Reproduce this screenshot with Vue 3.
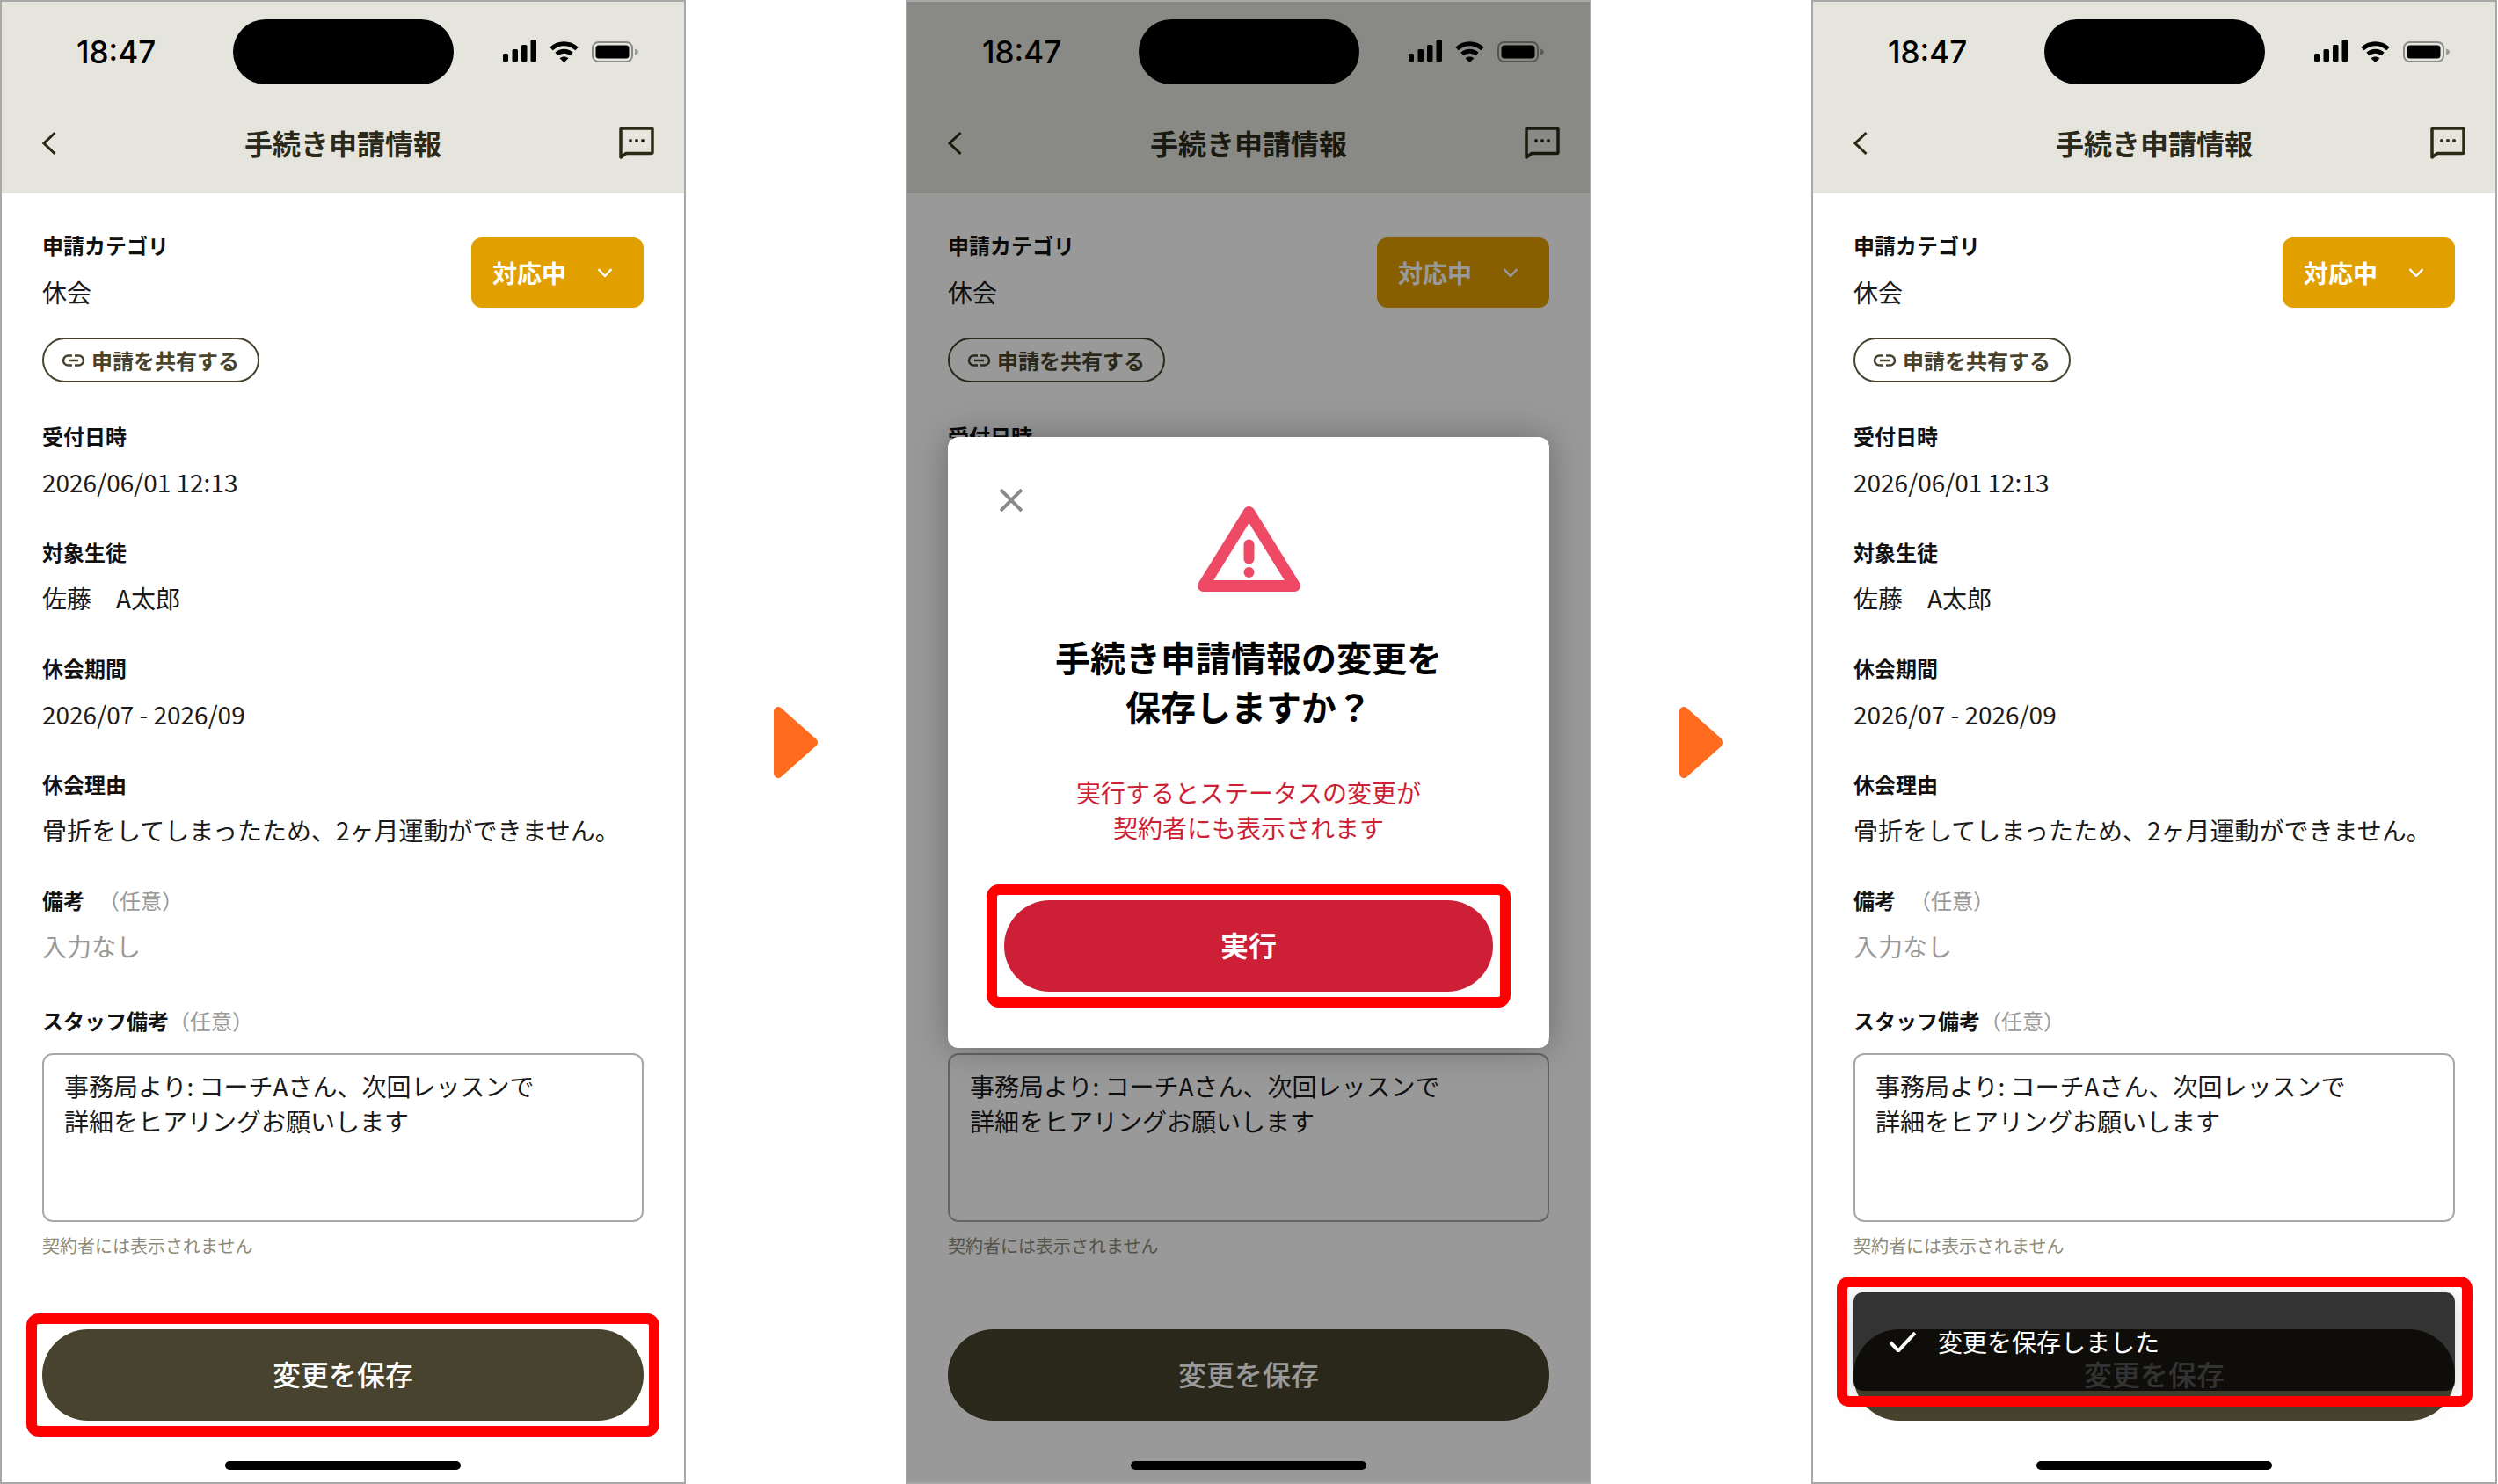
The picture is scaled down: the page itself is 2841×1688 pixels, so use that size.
<script setup>
const screens = [
  { id: 1, highlightSave: true },
  { id: 2, modal: true },
  { id: 3, toast: true },
]
const fields = [
  { label: '受付日時', value: '2026/06/01 12:13' },
  { label: '対象生徒', value: '佐藤　A太郎' },
  { label: '休会期間', value: '2026/07 - 2026/09' },
  { label: '休会理由', value: '骨折をしてしまったため、2ヶ月運動ができません。' },
]
</script>

<template>
  <div class="board">
    <template v-for="(s, i) in screens" :key="s.id">
      <div v-if="i > 0" class="step">
        <svg class="arrow" width="50" height="81" viewBox="0 0 50 81">
          <polygon points="5,5 45,40.5 5,76" />
        </svg>
      </div>
      <section class="phone">
        <header class="head">
          <div class="status">
            <span class="time">18:47</span>
            <span class="island"></span>
            <div class="sys">
              <svg width="38" height="25" viewBox="0 0 38 25" class="sys-signal">
                <rect x="0" y="16" width="6" height="9" rx="1.5" />
                <rect x="10.5" y="11" width="6.5" height="14" rx="1.5" />
                <rect x="21" y="6" width="6.5" height="19" rx="1.5" />
                <rect x="31.5" y="0" width="6.5" height="25" rx="1.5" />
              </svg>
              <svg width="33" height="24" viewBox="0 0 33 24" class="sys-wifi">
                <path d="M2 8.5C10.5 .8 22.5 .8 31 8.5" />
                <path d="M8 14.5C13 10 20 10 25 14.5" />
                <path class="wifi-dot" d="M16.5 24L11.5 19.2C14.5 16.8 18.5 16.8 21.5 19.2Z" />
              </svg>
              <svg width="54" height="24" viewBox="0 0 54 24" class="sys-battery">
                <rect class="bat-frame" x="1" y="1" width="45" height="22" rx="6.5" />
                <rect class="bat-fill" x="4.5" y="4.5" width="38" height="15" rx="3.5" />
                <path class="bat-tip" d="M49 8.5c2.5.5 4 2 4 3.5s-1.500 3-4 3.500Z" />
              </svg>
            </div>
          </div>
          <div class="nav">
            <svg class="nav-back" width="16" height="28" viewBox="0 0 16 28">
              <path d="M14.500 2L2 14L14.500 26" />
            </svg>
            <h1 class="nav-title">手続き申請情報</h1>
            <svg class="nav-chat" width="40" height="38" viewBox="0 0 40 38">
              <path class="chat-line" d="M2 35V3.500Q2 2 3.500 2H36.500Q38 2 38 3.500V29Q38 30.500 36.500 30.500H8L2 35Z" />
              <circle cx="13" cy="16" r="2" />
              <circle cx="20" cy="16" r="2" />
              <circle cx="27" cy="16" r="2" />
            </svg>
          </div>
        </header>

        <main class="body">
          <div class="top-row">
            <div>
              <div class="label">申請カテゴリ</div>
              <div class="value first">休会</div>
            </div>
            <div class="state">
              <span>対応中</span>
              <svg width="16" height="10" viewBox="0 0 16 10">
                <path d="M.5 1L8 9L15.500 1" />
              </svg>
            </div>
          </div>
          <div class="share">
            <svg width="27" height="14" viewBox="0 0 27 14">
              <path d="M12 1.500H7.500a5.500 5.500 0 0 0 0 11H12M15 1.500H19.500a5.500 5.500 0 0 1 0 11H15M8 7H19" />
            </svg>
            <span>申請を共有する</span>
          </div>

          <div class="fields">
            <div v-for="f in fields" :key="f.label" class="field">
              <div class="label">{{ f.label }}</div>
              <div class="value">{{ f.value }}</div>
            </div>
            <div class="field">
              <div class="label">備考<span class="optional wide">（任意）</span></div>
              <div class="value muted">入力なし</div>
            </div>
          </div>

          <div class="label staff">スタッフ備考<span class="optional">（任意）</span></div>
          <div class="memo">事務局より: コーチAさん、次回レッスンで<br />詳細をヒアリングお願いします</div>
          <p class="hint">契約者には表示されません</p>

          <button class="save" :class="{ marked: s.highlightSave }">変更を保存</button>
          <div class="home"></div>
        </main>

        <div v-if="s.modal" class="scrim">
          <div class="modal">
            <svg class="close" width="26" height="26" viewBox="0 0 26 26">
              <path d="M1 1L25 25M25 1L1 25" />
            </svg>
            <svg class="warn" width="117" height="97" viewBox="0 0 117 97">
              <path class="warn-tri" d="M58.500 6.500L6.500 90.500H110.500Z" />
              <rect x="52.500" y="37.500" width="12" height="28" rx="6" />
              <circle cx="58.500" cy="75" r="6" />
            </svg>
            <h2 class="modal-title">手続き申請情報の変更を<br />保存しますか？</h2>
            <p class="modal-note">実行するとステータスの変更が<br />契約者にも表示されます</p>
            <button class="run marked">実行</button>
          </div>
        </div>

        <div v-if="s.toast" class="toast marked-toast">
          <svg width="30" height="23" viewBox="0 0 30 23">
            <path d="M1 12L10 21.500L29 1" />
          </svg>
          <span>変更を保存しました</span>
        </div>
      </section>
    </template>
  </div>
</template>

<style>
html, body { margin: 0; background: #fff; }
</style>

<style scoped>
.board {
  width: 2841px;
  height: 1688px;
  display: flex;
  align-items: center;
  font-family: "Noto Sans CJK JP", "Noto Sans", sans-serif;
  color: #111;
  overflow: hidden;
}
.step {
  width: 250px;
  display: flex;
  justify-content: center;
}
.arrow polygon {
  fill: #ff6b1f;
  stroke: #ff6b1f;
  stroke-width: 10;
  stroke-linejoin: round;
}
.phone {
  position: relative;
  flex: none;
  width: 780px;
  height: 1688px;
  box-sizing: border-box;
  border: 2px solid #a8a8a8;
  background: #fff;
  display: flex;
  flex-direction: column;
}
.head {
  height: 218px;
  background: #e5e5de;
  flex: none;
}
.status {
  display: grid;
  grid-template-columns: 1fr 251px 1fr;
  align-items: center;
  padding-top: 20px;
}
.time {
  font-family: Inter, sans-serif;
  font-weight: 500;
  font-size: 35px;
  line-height: 74px;
  padding-left: 85px;
  color: #000;
}
.island {
  height: 74px;
  border-radius: 37px;
  background: #000;
}
.sys {
  display: flex;
  align-items: flex-start;
  padding-left: 56px;
  gap: 15px;
  margin-top: -3px;
}
.sys-signal rect { fill: #000; }
.sys-wifi { margin-top: 2px; }
.sys-wifi path {
  fill: none;
  stroke: #000;
  stroke-width: 5;
}
.sys-wifi .wifi-dot { fill: #000; stroke: none; }
.sys-battery { margin-top: 2px; }
.bat-frame { fill: none; stroke: #8a8a86; stroke-width: 2; }
.bat-fill { fill: #000; }
.bat-tip { fill: #9a9a96; }
.nav {
  height: 64px;
  margin-top: 35px;
  padding: 0 34px;
  display: grid;
  grid-template-columns: 1fr auto 1fr;
  align-items: center;
}
.nav-back { justify-self: start; margin-left: 12px; }
.nav-back path {
  fill: none;
  stroke: #2b2a14;
  stroke-width: 3;
}
.nav-title {
  margin: 0;
  padding-bottom: 2px;
  font-size: 32px;
  line-height: 62px;
  font-weight: 700;
  color: #2b2a1a;
}
.nav-chat { justify-self: end; margin-top: -1px; }
.nav-chat circle { fill: #2b2a14; }
.chat-line {
  fill: none;
  stroke: #2b2a14;
  stroke-width: 3.5;
  stroke-linejoin: round;
}
.body {
  flex: 1;
  padding: 43px 46px 0;
}
.top-row {
  display: flex;
  justify-content: space-between;
  align-items: flex-start;
}
.label {
  font-size: 24px;
  line-height: 32px;
  font-weight: 700;
  color: #111;
}
.value {
  margin-top: 16px;
  font-size: 28px;
  line-height: 40px;
  font-weight: 400;
  color: #1a1a1a;
}
.value.first { margin-top: 17px; }
.muted { color: #999; }
.optional {
  font-weight: 400;
  color: #999;
}
.optional.wide { margin-left: 16px; }
.state {
  margin-top: 7px;
  width: 196px;
  height: 80px;
  box-sizing: border-box;
  padding: 0 36px 0 24px;
  background: #e29f00;
  border-radius: 12px;
  display: flex;
  align-items: center;
  justify-content: space-between;
  color: #fff;
  font-size: 28px;
  font-weight: 700;
}
.state svg path {
  fill: none;
  stroke: #fff;
  stroke-width: 2.5;
}
.share {
  margin-top: 32px;
  width: 247px;
  height: 51px;
  box-sizing: border-box;
  border: 2px solid #47432e;
  border-radius: 26px;
  padding-left: 20px;
  display: flex;
  align-items: center;
  gap: 7px;
  color: #47432e;
  font-size: 24px;
  font-weight: 700;
  line-height: 1;
}
.share svg path {
  fill: none;
  stroke: #47432e;
  stroke-width: 2.500;
}
.fields {
  margin-top: 45px;
  display: flex;
  flex-direction: column;
  gap: 44px;
}
.staff { margin-top: 49px; }
.memo {
  margin-top: 21px;
  height: 192px;
  box-sizing: border-box;
  border: 2px solid #a8a8a8;
  border-radius: 12px;
  padding: 15px 23px;
  font-size: 28px;
  line-height: 40px;
  color: #1a1a1a;
}
.hint {
  margin: 13px 0 0;
  font-size: 20px;
  line-height: 28px;
  color: #8e8b78;
}
.save {
  position: relative;
  display: block;
  width: 684px;
  height: 104px;
  margin-top: 81px;
  padding: 0 0 4px;
  border: 0;
  border-radius: 52px;
  background: #47432e;
  color: #fff;
  font: 500 32px/1 "Noto Sans CJK JP", sans-serif;
}
.home {
  width: 268px;
  height: 10px;
  margin: 46px auto 0;
  border-radius: 5px;
  background: #000;
}
.marked::after {
  content: "";
  position: absolute;
  inset: -18px;
  border: 12px solid #f00;
  border-radius: 14px;
  pointer-events: none;
}
.scrim {
  position: absolute;
  inset: 0;
  background: rgba(0, 0, 0, 0.4);
  display: flex;
  align-items: center;
  justify-content: center;
}
.modal {
  position: relative;
  width: 684px;
  box-sizing: border-box;
  padding: 79px 0 64px;
  background: #fff;
  border-radius: 12px;
  box-shadow: 0 0 40px rgba(0, 0, 0, 0.3);
  display: flex;
  flex-direction: column;
  align-items: center;
  text-align: center;
}
.close {
  position: absolute;
  left: 59px;
  top: 59px;
}
.close path {
  fill: none;
  stroke: #8a8a8e;
  stroke-width: 4;
}
.warn rect, .warn circle { fill: #ef4a65; }
.warn-tri {
  fill: none;
  stroke: #ef4a65;
  stroke-width: 13;
  stroke-linejoin: round;
}
.modal-title {
  margin: 46px 0 0;
  font-size: 40px;
  line-height: 56px;
  font-weight: 700;
  color: #000;
}
.modal-note {
  margin: 50px 0 0;
  font-size: 28px;
  line-height: 40px;
  color: #cd1f36;
}
.run {
  position: relative;
  width: 556px;
  height: 104px;
  margin-top: 63px;
  padding: 0 0 3px;
  border: 0;
  border-radius: 52px;
  background: #cd1f36;
  color: #fff;
  font: 700 32px/1 "Noto Sans CJK JP", sans-serif;
}
.run.marked::after { inset: -18px -20px; }
.toast {
  position: absolute;
  left: 46px;
  right: 46px;
  top: 1468px;
  height: 112px;
  border-radius: 10px;
  background: rgba(0, 0, 0, 0.8);
  box-shadow: 0 6px 30px rgba(0, 0, 0, 0.18);
  display: flex;
  align-items: center;
  gap: 25px;
  padding: 0 0 0 41px;
  color: #fff;
  font-size: 28px;
  line-height: 40px;
}
.toast svg path {
  fill: none;
  stroke: #fff;
  stroke-width: 4;
}
.marked-toast::after {
  content: "";
  position: absolute;
  inset: -18px -20px -18px -19px;
  border: 12px solid #f00;
  border-radius: 14px;
}
</style>
